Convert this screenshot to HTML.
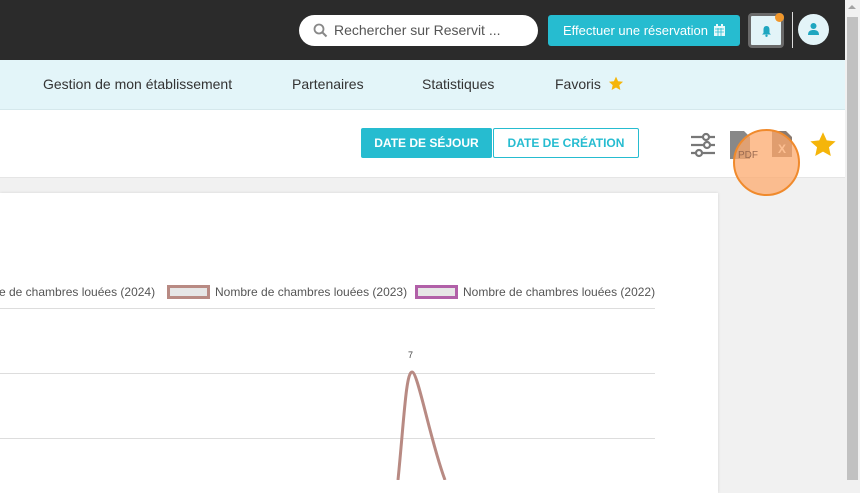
<!DOCTYPE html>
<html><head><meta charset="utf-8"><style>
*{margin:0;padding:0;box-sizing:border-box}
body{width:860px;height:480px;overflow:hidden;background:#f1f1f1;font-family:"Liberation Sans",sans-serif;position:relative}
.top{position:absolute;left:0;top:0;width:845px;height:60px;background:#2b2b2b}
.search{position:absolute;left:299px;top:15px;width:239px;height:31px;background:#fff;border-radius:16px;font-size:14px;color:#555;line-height:31px;padding-left:35px}
.btn{position:absolute;left:548px;top:15px;width:192px;height:31px;background:#26bcd0;border-radius:3px;color:#fff;font-size:13px;line-height:31px;padding-left:15px}
.bell{position:absolute;left:748px;top:13px;width:36px;height:35px;border:3px solid #6a6a6a;background:#e3f4f8;border-radius:4px}
.nav{position:absolute;left:0;top:60px;width:845px;height:50px;background:#e3f5f9;border-bottom:1px solid #d5e8ec;font-size:14px;color:#333}
.nav span{position:absolute;top:16px;line-height:16px}
.wbar{position:absolute;left:0;top:110px;width:845px;height:68px;background:#fff;border-bottom:1px solid #e5e5e5}
.b1{position:absolute;left:361px;top:128px;width:131px;height:30px;background:#26bcd0;color:#fff;font-size:12px;font-weight:bold;text-align:center;line-height:30px;border-radius:2px}
.b2{position:absolute;left:493px;top:128px;width:146px;height:30px;border:1px solid #26bcd0;color:#26bcd0;font-size:12px;font-weight:bold;text-align:center;line-height:28px;background:#fff;border-radius:2px}
.card{position:absolute;left:0;top:193px;width:718px;height:300px;background:#fff;box-shadow:0 0 3px rgba(0,0,0,.12)}
.sb{position:absolute;left:845px;top:0;width:15px;height:480px;background:#f1f1f1}
.thumb{position:absolute;left:847px;top:17px;width:11px;height:463px;background:#c1c1c1}
.leg{position:absolute;top:285px;height:14px;line-height:14px;font-size:12px;color:#555;white-space:nowrap;display:flex;align-items:center}
.box{display:block;width:43px;height:14px;background:#e6e6e6;border:3px solid #b88a83;margin-right:5px}
.gl{position:absolute;left:0;width:655px;height:1px;background:#ddd}
</style></head><body>
<div class="top"></div>
<div class="search"><svg style="position:absolute;left:14px;top:8px" width="15" height="15" viewBox="0 0 15 15"><circle cx="6" cy="6" r="4.5" fill="none" stroke="#888" stroke-width="1.8"/><path d="M9.5 9.5l4 4" stroke="#888" stroke-width="2"/></svg>Rechercher sur Reservit ...</div>
<div class="btn">Effectuer une réservation <svg width="11" height="12" viewBox="0 0 11 12" style="vertical-align:-1px;margin-left:2px"><rect x="0" y="2" width="11" height="10" fill="#e8f8fa"/><rect x="2" y="0" width="2" height="3" fill="#e8f8fa"/><rect x="7" y="0" width="2" height="3" fill="#e8f8fa"/><path d="M1 5h9M1 8h9M4 4v8M7 4v8" stroke="#26bcd0" stroke-width=".8"/></svg></div>
<div class="bell"><svg style="position:absolute;left:10px;top:9px" width="11" height="12" viewBox="0 0 11 12"><path d="M5.5 1C3 1 2.5 3 2.5 5v3L1 9.5h9L8.5 8V5C8.5 3 8 1 5.5 1z" fill="#1ea6c0"/><circle cx="5.5" cy="10.8" r="1.2" fill="#1ea6c0"/></svg><div style="position:absolute;left:24px;top:-3px;width:9px;height:9px;border-radius:50%;background:#f0962a"></div></div>
<div style="position:absolute;left:792px;top:12px;width:1px;height:36px;background:#ddd"></div>
<div style="position:absolute;left:798px;top:14px;width:31px;height:31px;border-radius:50%;background:#e3f4f8"><svg style="position:absolute;left:9px;top:8px" width="13" height="14" viewBox="0 0 13 14"><circle cx="6.5" cy="4" r="3" fill="#1ea6c0"/><path d="M1 13c0-4 2.5-5 5.5-5s5.5 1 5.5 5z" fill="#1ea6c0"/></svg></div>
<div class="nav"><span style="left:43px">Gestion de mon établissement</span><span style="left:292px">Partenaires</span><span style="left:422px">Statistiques</span><span style="left:555px">Favoris <svg width="16" height="15" viewBox="0 0 24 23" style="vertical-align:-2px;margin-left:3px"><path d="M12 1l3.2 7 7.6.8-5.7 5.1 1.6 7.5L12 17.6l-6.7 3.8 1.6-7.5L1.2 8.8 8.8 8z" fill="#f5b50a"/></svg></span></div>
<div class="wbar"></div>
<div class="b1">DATE DE SÉJOUR</div><div class="b2">DATE DE CRÉATION</div>
<svg style="position:absolute;left:690px;top:132px" width="26" height="26" viewBox="0 0 26 26" fill="none" stroke="#777" stroke-width="2.2"><path d="M1 5h24M1 13h24M1 21h24"/><circle cx="16" cy="5" r="3" fill="#fff"/><circle cx="17" cy="13" r="3" fill="#fff"/><circle cx="9" cy="21" r="3" fill="#fff"/></svg>
<svg style="position:absolute;left:730px;top:131px" width="22" height="28" viewBox="0 0 22 28"><path d="M0 0h14l6 6v22H0z" fill="#888"/></svg>
<svg style="position:absolute;left:772px;top:131px" width="22" height="26" viewBox="0 0 22 26"><path d="M0 0h14l6 6v20H0z" fill="#8a7a70"/><text x="10" y="22" fill="#fff" font-size="12" font-weight="bold" text-anchor="middle" font-family="Liberation Sans">X</text></svg>
<svg style="position:absolute;left:809px;top:131px" width="28" height="27" viewBox="0 0 24 23"><path d="M12 1l3.2 7 7.6.8-5.7 5.1 1.6 7.5L12 17.6l-6.7 3.8 1.6-7.5L1.2 8.8 8.8 8z" fill="#f5b50a"/></svg>
<div style="position:absolute;left:733px;top:129px;width:67px;height:67px;border-radius:50%;background:rgba(252,170,110,.75);border:2px solid #f08a2c;color:#9a6a50;font-size:10px;padding:19px 0 0 3px">PDF</div>
<div class="card"></div>
<div class="leg" style="left:-5px">re de chambres louées (2024)</div>
<div class="leg" style="left:167px"><span class="box"></span>Nombre de chambres louées (2023)</div>
<div class="leg" style="left:415px"><span class="box" style="border-color:#b160a8"></span>Nombre de chambres louées (2022)</div>
<div class="gl" style="top:308px"></div><div class="gl" style="top:373px"></div><div class="gl" style="top:438px"></div>
<div style="position:absolute;left:408px;top:350px;font-size:9px;color:#444">7</div>
<svg style="position:absolute;left:0;top:360px" width="700" height="120"><path d="M398 120C404 60 406 12 412 12S430 80 445 120" fill="none" stroke="#b88a83" stroke-width="3"/></svg>
<div class="sb"></div><div class="thumb"></div>
<div style="position:absolute;left:848px;top:5px;width:0;height:0;border:4px solid transparent;border-bottom-color:#a3a3a3;border-top:0"></div>
</body></html>
